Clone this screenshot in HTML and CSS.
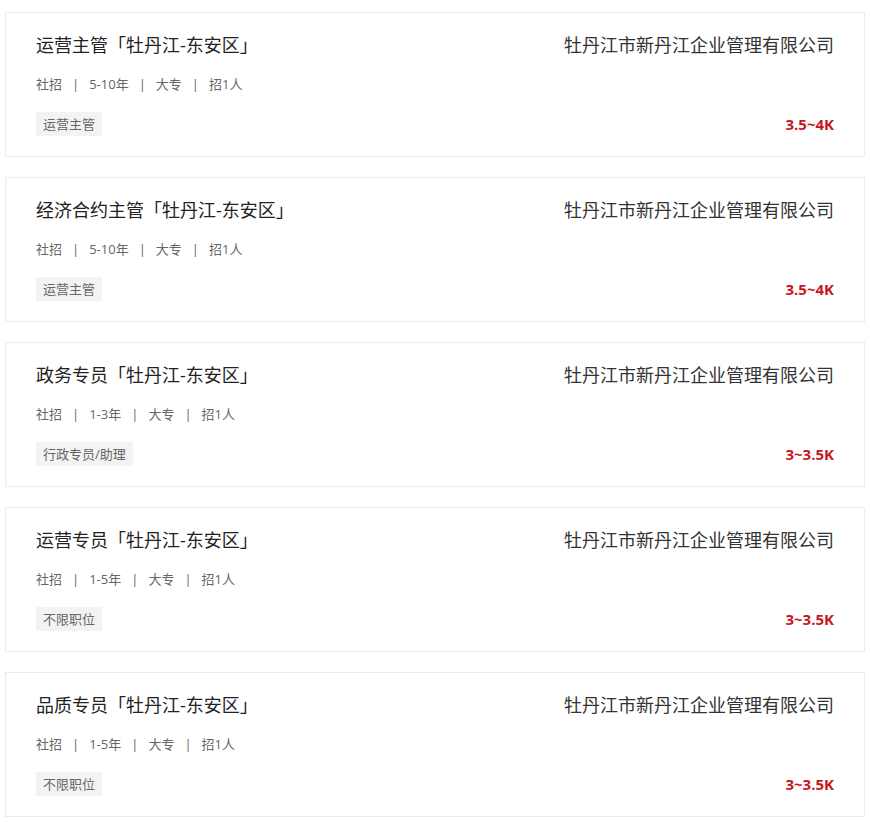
FILE: index.html
```html
<!DOCTYPE html>
<html lang="zh-CN">
<head>
    <meta charset="UTF-8">
    <meta name="viewport" content="width=device-width, initial-scale=1.0">
    <title>职位列表</title>
    <link rel="stylesheet" href="styles.css">
</head>
<body>
    <div class="job-list">
        <div class="job-card">
            <div class="job-left">
                <h3 class="job-title">运营主管「牡丹江-东安区」</h3>
                <p class="job-meta">社招<span class="sep">|</span>5-10年<span class="sep">|</span>大专<span class="sep">|</span>招1人</p>
                <span class="job-tag">运营主管</span>
            </div>
            <div class="job-right">
                <p class="company">牡丹江市新丹江企业管理有限公司</p>
                <p class="salary">3.5~4K</p>
            </div>
        </div>
        <div class="job-card">
            <div class="job-left">
                <h3 class="job-title">经济合约主管「牡丹江-东安区」</h3>
                <p class="job-meta">社招<span class="sep">|</span>5-10年<span class="sep">|</span>大专<span class="sep">|</span>招1人</p>
                <span class="job-tag">运营主管</span>
            </div>
            <div class="job-right">
                <p class="company">牡丹江市新丹江企业管理有限公司</p>
                <p class="salary">3.5~4K</p>
            </div>
        </div>
        <div class="job-card">
            <div class="job-left">
                <h3 class="job-title">政务专员「牡丹江-东安区」</h3>
                <p class="job-meta">社招<span class="sep">|</span>1-3年<span class="sep">|</span>大专<span class="sep">|</span>招1人</p>
                <span class="job-tag">行政专员/助理</span>
            </div>
            <div class="job-right">
                <p class="company">牡丹江市新丹江企业管理有限公司</p>
                <p class="salary">3~3.5K</p>
            </div>
        </div>
        <div class="job-card">
            <div class="job-left">
                <h3 class="job-title">运营专员「牡丹江-东安区」</h3>
                <p class="job-meta">社招<span class="sep">|</span>1-5年<span class="sep">|</span>大专<span class="sep">|</span>招1人</p>
                <span class="job-tag">不限职位</span>
            </div>
            <div class="job-right">
                <p class="company">牡丹江市新丹江企业管理有限公司</p>
                <p class="salary">3~3.5K</p>
            </div>
        </div>
        <div class="job-card">
            <div class="job-left">
                <h3 class="job-title">品质专员「牡丹江-东安区」</h3>
                <p class="job-meta">社招<span class="sep">|</span>1-5年<span class="sep">|</span>大专<span class="sep">|</span>招1人</p>
                <span class="job-tag">不限职位</span>
            </div>
            <div class="job-right">
                <p class="company">牡丹江市新丹江企业管理有限公司</p>
                <p class="salary">3~3.5K</p>
            </div>
        </div>
    </div>
</body>
</html>
```

FILE: styles.css
```css
body {
    margin: 0;
    padding: 12px 5px;
    font-family: "Open Sans", "Noto Sans CJK SC", sans-serif;
    background: #fff;
    color: #333;
}
.job-list {
    display: flex;
    flex-direction: column;
    gap: 20px;
}
.job-card {
    display: flex;
    justify-content: space-between;
    border: 1px solid #ebebeb;
    padding: 20px 30px;
}
.job-left {
    display: flex;
    flex-direction: column;
    align-items: flex-start;
}
.job-title {
    margin: 0;
    font-size: 18px;
    font-weight: normal;
    line-height: 24px;
    color: #222;
}
.job-meta {
    margin: 17px 0 0;
    font-size: 13px;
    line-height: 20px;
    color: #666;
}
.sep {
    margin: 0 10px;
}
.job-tag {
    margin-top: 18px;
    padding: 0 7px;
    height: 24px;
    line-height: 24px;
    font-size: 13px;
    color: #666;
    background: #f3f3f3;
}
.job-right {
    display: flex;
    flex-direction: column;
    justify-content: space-between;
    align-items: flex-end;
}
.company {
    margin: 0;
    font-size: 18px;
    line-height: 24px;
    color: #333;
}
.salary {
    margin: 0;
    font-size: 15px;
    line-height: 24px;
    font-weight: bold;
    color: #c8161d;
}
```
